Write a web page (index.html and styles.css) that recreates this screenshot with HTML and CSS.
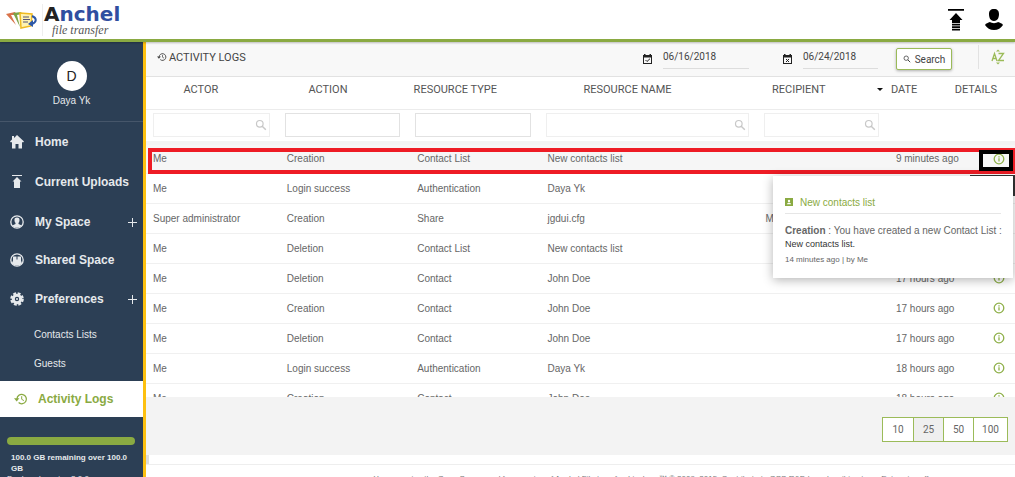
FILE: index.html
```html
<!DOCTYPE html>
<html lang="en">
<head>
<meta charset="utf-8">
<title>Anchel - Activity Logs</title>
<link rel="stylesheet" href="styles.css">
</head>
<body>
<svg class="defs" aria-hidden="true">
  <symbol id="info" viewBox="0 0 12 12"><circle cx="6" cy="6" r="4.8" fill="none" stroke="currentColor" stroke-width="1.3"/><path d="M6 5.3v3.2M6 3.2v1.2" stroke="currentColor" stroke-width="1.3"/></symbol>
  <symbol id="mag" viewBox="0 0 12 12"><circle cx="4.8" cy="4.8" r="3.3" fill="none" stroke="currentColor" stroke-width="1.2"/><path d="M7.2 7.2l3.6 3.6" stroke="currentColor" stroke-width="1.5"/></symbol>
  <symbol id="history" viewBox="0 0 14 12"><path d="M3 6a4.7 4.7 0 1 1 1.6 3.6" fill="none" stroke="currentColor" stroke-width="1.3"/><path d="M0 5.2h5.4L2.7 8.4z" fill="currentColor"/><path d="M7.7 3.2v3.1l2.2 1.3" fill="none" stroke="currentColor"/></symbol>
  <symbol id="upload" viewBox="0 0 16 22"><path d="M0 0h16v1.8H0zM8 4l6.5 7H12v3H4v-3H1.500zM4 14.800h8v1.800H4zM4 17.300h8v1.800H4zM4 19.800h8v1.800H4z" fill="currentColor"/></symbol>
  <symbol id="upload-small" viewBox="0 0 14 14"><path d="M2 0h10v1H2zM7 2l4.500 4.500H10V13H4V6.500H2.500z" fill="currentColor"/></symbol>
</svg>
<header class="top">
  <a class="logo" href="#" aria-label="Anchel file transfer">
    <svg class="logo-mark" viewBox="0 0 32 20">
      <path d="M0 4l9-2 2 3-6 0 5 10z" fill="#d9734a"/>
      <path d="M7 3l8-1 1 2-5 1 3 12z" fill="#7da547"/>
      <path d="M14 3l12 1-1 12-10 2z" fill="#fff3b0" stroke="#f0bb22" stroke-width="1.500"/>
      <path d="M17 7h6M17 9.500h7M17 12h5" stroke="#557" stroke-width="1"/>
      <path d="M26 6c5 2 5 6 0 8" fill="none" stroke="#2c58a8" stroke-width="2"/><path d="M27 10v7l-5-3z" fill="#2c58a8"/>
    </svg>
    <span class="logo-text"><b><i>A</i>nchel</b><em>file transfer</em></span>
  </a>
  <nav class="top-actions" aria-label="Account">
    <button aria-label="Uploads"><svg width="16" height="22"><use href="#upload"/></svg></button>
    <button aria-label="Profile"><svg width="18" height="22" viewBox="0 0 18 22"><path d="M9 0c3.500 0 5 2 5 5s-1 7-5 7-5-4-5-7 1.500-5 5-5zM0 16c1-2 3-2 5-3 2 1.500 6 1.500 8 0 2 1 4 1 5 3-2 3-5 5-9 5s-7-2-9-5z"/></svg></button>
  </nav>
</header>
<div class="app">
  <aside class="side">
    <div class="profile"><span class="avatar">D</span><span>Daya Yk</span></div>
    <nav class="menu">
      <a href="#"><svg viewBox="0 0 14 14"><path d="M7 0l7 6.500-1 1L12 7v6.500H8.500V9h-3v4.500H2V7l-1 .5-1-1L2 4.500V1h2v2z"/></svg>Home</a>
      <a href="#"><svg viewBox="0 0 14 14"><use href="#upload-small"/></svg>Current Uploads</a>
      <a href="#"><svg viewBox="0 0 14 14"><circle cx="7" cy="7" r="6.200" fill="none" stroke="currentColor" stroke-width="1.300"/><path d="M7 2.500c2 0 2.700 1.300 2.500 3-.2 1.500-.7 2-1 2.500v1l3.300 1.500C10 13 4 13 2.200 10.500L5.500 9V8c-.3-.5-.8-1-1-2.500-.2-1.700.5-3 2.500-3z"/></svg>My Space<span class="plus" aria-hidden="true"></span></a>
      <a class="shared" href="#"><svg viewBox="0 0 14 14"><circle cx="7" cy="7" r="6.200" fill="none" stroke="currentColor" stroke-width="1.300"/><path d="M3 3.500h3.500v3h1v-3H11v4l1 3C10 13 4 13 1.700 10.500L3 7.500z"/></svg>Shared Space</a>
      <a class="prefs" href="#"><svg viewBox="0 0 14 14"><circle cx="7" cy="7" r="3.700" fill="none" stroke="currentColor" stroke-width="3"/><circle cx="7" cy="7" r="5.700" fill="none" stroke="currentColor" stroke-width="2.200" stroke-dasharray="2.900 1.580"/><circle cx="7" cy="7" r="1"/></svg>Preferences<span class="plus" aria-hidden="true"></span></a>
      <a class="sub" href="#">Contacts Lists</a>
      <a class="sub" href="#">Guests</a>
      <a class="active" href="#"><svg viewBox="0 0 14 12"><use href="#history"/></svg>Activity Logs</a>
    </nav>
    <div class="quota"><div class="bar"></div><p>100.0 GB remaining over 100.0 GB</p><small>Deployed version 2.0.0</small></div>
  </aside>
  <main class="main">
    <form class="toolbar">
      <h1><svg width="10" height="10" viewBox="0 0 14 12"><use href="#history"/></svg>ACTIVITY LOGS</h1>
      <label class="date from"><svg width="9" height="10" viewBox="0 0 9 10"><path d="M1 0h1.500v1h4V0H8v1h1v9H0V1h1zM1 3.500V9h7V3.500z" fill-rule="evenodd"/><path d="M2.500 6l1.500 1.500L7 4.700" fill="none" stroke="#222"/></svg><input aria-label="From date" value="06/16/2018"></label>
      <label class="date to"><svg width="9" height="10" viewBox="0 0 9 10"><path d="M1 0h1.500v1h4V0H8v1h1v9H0V1h1zM1 3.500V9h7V3.500z" fill-rule="evenodd"/><path d="M3 5l3 3M6 5L3 8" stroke="#222"/></svg><input aria-label="To date" value="06/24/2018"></label>
      <button class="search" type="button"><svg width="8" height="8" viewBox="0 0 12 12"><use href="#mag"/></svg>Search</button>
      <button class="sort" type="button" aria-label="Sort alphabetically"><svg width="14" height="16" viewBox="0 0 14 16"><path d="M1 12L3.500 4.500 6 12M1.800 9.500h3.500M7.500 4.500h5l-5 7H13" fill="none" stroke="currentColor" stroke-width="1.300"/><path d="M5 2.500L7 .5l2 2zM5 13.500h4l-2 2z" fill="currentColor"/></svg></button>
    </form>
    <div class="list">
      <table>
        <colgroup><col class="c-actor"><col class="c-mid"><col class="c-mid"><col class="c-name"><col class="c-mid"><col class="c-date"><col></colgroup>
        <thead>
          <tr class="heads"><th class="h1">ACTOR</th><th class="h2">ACTION</th><th class="h3">RESOURCE TYPE</th><th class="h4">RESOURCE NAME</th><th class="h5">RECIPIENT</th><th class="hdate"><span><i></i>DATE</span></th><th class="hdet">DETAILS</th></tr>
          <tr class="filters"><td><label class="filter"><input aria-label="Filter actor"><svg width="12" height="12"><use href="#mag"/></svg></label></td><td><label class="filter plain"><input aria-label="Filter action"></label></td><td><label class="filter plain"><input aria-label="Filter resource type"></label></td><td><label class="filter"><input aria-label="Filter resource name"><svg width="12" height="12"><use href="#mag"/></svg></label></td><td><label class="filter"><input aria-label="Filter recipient"><svg width="12" height="12"><use href="#mag"/></svg></label></td><td></td><td></td></tr>
        </thead>
        <tbody>
          <tr class="picked"><td>Me</td><td>Creation</td><td>Contact List</td><td>New contacts list</td><td></td><td>9 minutes ago</td><td class="det"><button aria-label="Details"><svg><use href="#info"/></svg></button>
            <span class="tip"></span>
            <span class="frame-red"></span><span class="frame-black"></span>
            <section class="pop">
              <h2><svg width="8" height="8" viewBox="0 0 8 8"><path d="M0 0h8v8H0z" fill="currentColor"/><circle cx="4" cy="3" r="1.200" fill="#fff"/><path d="M1.800 6.200c.5-2 3.900-2 4.400 0z" fill="#fff"/></svg>New contacts list</h2>
              <p class="what"><strong>Creation</strong> : You have created a new Contact List :</p>
              <p class="item">New contacts list<span>.</span></p>
              <p class="when">14 minutes ago | by Me</p>
            </section></td></tr>
          <tr><td>Me</td><td>Login success</td><td>Authentication</td><td>Daya Yk</td><td></td><td></td><td></td></tr>
          <tr><td>Super administrator</td><td>Creation</td><td>Share</td><td>jgdui.cfg</td><td>Me</td><td></td><td></td></tr>
          <tr><td>Me</td><td>Deletion</td><td>Contact List</td><td>New contacts list</td><td></td><td></td><td></td></tr>
          <tr><td>Me</td><td>Deletion</td><td>Contact</td><td>John Doe</td><td></td><td>17 hours ago</td><td class="det"><button aria-label="Details"><svg><use href="#info"/></svg></button></td></tr>
          <tr><td>Me</td><td>Creation</td><td>Contact</td><td>John Doe</td><td></td><td>17 hours ago</td><td class="det"><button aria-label="Details"><svg><use href="#info"/></svg></button></td></tr>
          <tr><td>Me</td><td>Deletion</td><td>Contact</td><td>John Doe</td><td></td><td>17 hours ago</td><td class="det"><button aria-label="Details"><svg><use href="#info"/></svg></button></td></tr>
          <tr><td>Me</td><td>Login success</td><td>Authentication</td><td>Daya Yk</td><td></td><td>18 hours ago</td><td class="det"><button aria-label="Details"><svg><use href="#info"/></svg></button></td></tr>
          <tr><td>Me</td><td>Creation</td><td>Contact</td><td>John Doe</td><td></td><td>18 hours ago</td><td class="det"><button aria-label="Details"><svg><use href="#info"/></svg></button></td></tr>
        </tbody>
      </table>
    </div>
    <div class="pager"><div class="sizes"><button>10</button><button class="on">25</button><button>50</button><button class="wide">100</button></div></div>
    <div class="scroll"><span></span></div>
    <footer>You are using the Open Source and free version of Anchel File transfer, Linshare™ © 2009–2015. Contribute to OSS R&amp;D by subscribing to an Enterprise offer.</footer>
  </main>
</div>
</body>
</html>
```
FILE: styles.css
```css
* { box-sizing: border-box; }
body { margin: 0; height: 100vh; display: flex; flex-direction: column; overflow: hidden; font-family: "Liberation Sans", Arial, sans-serif; font-size: 10px; color: #666; background: #fff; }
button { font: inherit; color: inherit; background: none; border: 0; padding: 0; }
a { color: inherit; text-decoration: none; }
input { font: inherit; color: inherit; background: none; border: 0; padding: 0; min-width: 0; outline: 0; }
svg { display: block; flex: none; fill: currentColor; }
h1, h2, p { margin: 0; font-weight: normal; }
.defs { position: absolute; width: 0; height: 0; }

.top { flex: none; height: 42px; padding: 0 12px 0 6px; border-bottom: 3px solid #8aaa42; display: flex; justify-content: space-between; align-items: center; position: relative; z-index: 1; box-shadow: 0 1px 2px rgba(0, 0, 0, .25); }
.logo { display: flex; align-items: center; gap: 4px; }
.logo-mark { width: 32px; height: 20px; }
.logo-text { display: flex; flex-direction: column; border-left: 1px solid #eee; padding-left: 1px; }
.logo-text b { font: bold 20px/20px "DejaVu Sans", sans-serif; color: #2f4ea0; }
.logo-text b i { font-style: normal; color: #222; }
.logo-text em { font: italic 12px/12px "Liberation Serif", serif; color: #555; padding-left: 8px; }
.top-actions { display: flex; gap: 21px; color: #000; }

.app { flex: 1; min-height: 0; display: flex; }
.side { flex: none; width: 146px; background: #2c3f55; border-right: 3px solid #fdc010; color: #e6e9ec; overflow: hidden; }
.profile { height: 80px; padding-top: 19px; display: flex; flex-direction: column; align-items: center; gap: 3px; border-bottom: 1px solid #46566a; line-height: 14px; }
.avatar { width: 30px; height: 30px; border-radius: 50%; background: #fff; color: #222; font-size: 14px; display: flex; align-items: center; justify-content: center; }
.menu { display: flex; flex-direction: column; font-size: 12px; font-weight: bold; }
.menu a { height: 40px; padding: 0 6px 0 10px; display: flex; align-items: center; gap: 11px; flex: none; }
.menu svg { width: 14px; height: 14px; }
.menu .plus { margin-left: auto; width: 9px; height: 9px; background: linear-gradient(#e6e9ec, #e6e9ec) center / 100% 1px no-repeat, linear-gradient(#e6e9ec, #e6e9ec) center / 1px 100% no-repeat; }
.menu .shared { height: 36px; }
.menu .prefs { height: 42px; }
.menu .sub { height: 29px; padding-left: 34px; font-size: 10px; font-weight: normal; }
.menu .active { height: 36px; margin-top: 3px; padding-left: 14px; gap: 10px; background: #fff; color: #8aaa42; }
.quota { padding: 20px 8px 0 7px; font-size: 8px; line-height: 11px; }
.bar { height: 8px; border-radius: 4px; background: #8aaa42; margin-bottom: 7px; }
.quota p { padding: 0 6px 0 4px; font-weight: bold; }
.quota small { font-size: 8px; display: block; white-space: nowrap; line-height: 9px; }

.main { flex: 1; min-width: 0; display: flex; flex-direction: column; }
.toolbar { flex: none; height: 35px; background: #f8f8f8; border-bottom: 1px solid #e2e2e2; display: flex; align-items: center; padding: 0 10px 0 11px; color: #444; }
.toolbar h1 { display: flex; align-items: center; gap: 2px; font: 11px Roboto, sans-serif; margin: 0 auto 4px 0; }
.date { display: flex; align-items: center; gap: 11px; color: #222; }
.date input { height: 20px; border-bottom: 1px solid #ddd; padding-bottom: 5px; font: 10px Roboto, sans-serif; color: #444; }
.from input { width: 86px; }
.to input { width: 75px; }
.to { margin-left: 34px; }
.search { margin-left: 18px; width: 56px; height: 22px; border: 1px solid #9bbb59; border-radius: 2px; background: #fff; display: flex; align-items: center; justify-content: center; gap: 4px; font: 10px Roboto, sans-serif; box-shadow: 0 1px 3px rgba(0, 0, 0, .3); }
.sort { margin: 0 0 4px 26px; height: 24px; padding-left: 12px; border-left: 1px solid #e2e2e2; color: #9bbb59; }

.list { flex: 1; min-height: 0; overflow: hidden; }
table { width: 100%; border-collapse: collapse; table-layout: fixed; }
.c-actor { width: 15.4%; }
.c-mid { width: 15%; }
.c-name { width: 25.1%; }
.c-date { width: 7.5%; }
td, th { padding: 0 0 0 7px; text-align: left; font-weight: normal; white-space: nowrap; }
.heads th { height: 32px; padding: 0 0 7px; border-bottom: 1px solid #ececec; text-align: center; font: 11px Roboto, sans-serif; color: #555; }
.heads .h1 { padding-right: 24px; }
.heads .h2 { padding-right: 34px; }
.heads .h3 { padding-right: 40px; }
.heads .h4 { padding-right: 44px; }
.heads .h5 { padding-right: 50px; }
.hdate span { display: flex; align-items: center; gap: 8px; margin-left: -12px; }
.hdate i { border: 3px solid transparent; border-top-color: #111; border-bottom: 0; }
.heads .hdet { padding-right: 18px; text-align: right; }
.filters td { height: 34px; padding: 0 10px 0 5px; border-bottom: 4px solid #f3f3f3; }
.filters td:first-child { padding: 0 10px 0 7px; }
.filter { height: 24px; border: 1px solid #efefef; display: flex; align-items: center; padding: 0 2px; color: #c8c8c8; }
.filter input { flex: 1; width: 0; }
.filter.plain { border-color: #e2e2e2; }
tbody td { height: 30px; border-bottom: 1px solid #f0f0f0; }
.picked { background: #f6f6f6; }
.det { text-align: right; padding-right: 10px; position: relative; }
.det button { display: inline-block; vertical-align: middle; color: #8fb04a; }
.det button svg { width: 12px; height: 12px; }
.frame-red { position: absolute; top: 3px; right: 0; width: calc(100vw - 148px); height: 26px; border: 4px solid #ee1c25; border-right-width: 2px; }
.frame-black { position: absolute; top: 5px; right: 2px; width: 34px; height: 21px; border: 4px solid #000; }
.tip { position: absolute; top: 30px; right: 0; width: 45px; height: 21px; background: #333; }
.pop { position: absolute; top: 31px; right: 2px; width: 240px; height: 102px; padding: 20px 12px 0; background: #fff; text-align: left; box-shadow: 0 2px 10px rgba(0, 0, 0, .3); z-index: 1; white-space: nowrap; }
.pop h2 { height: 18px; display: flex; align-items: flex-start; gap: 7px; border-bottom: 1px solid #e6e6e6; font-size: 10px; line-height: 14px; color: #8aaa42; }
.pop h2 svg { margin-top: 2px; }
.pop .what { margin-top: 9px; line-height: 15px; }
.pop .item { font-size: 9px; line-height: 13px; color: #333; }
.pop .when { font-size: 8px; line-height: 18px; }

.pager { flex: none; height: 58px; padding: 0 7px; background: #f3f3f3; display: flex; justify-content: flex-end; align-items: center; }
.sizes { display: flex; height: 25px; margin-top: 6px; border: 1px solid #9bbb59; background: #fff; font: 10px Roboto, sans-serif; }
.sizes button { width: 30px; }
.sizes button + button { border-left: 1px solid #9bbb59; }
.sizes .on { background: #efefef; }
.sizes .wide { width: 34px; }
.scroll { flex: none; height: 9px; }
.scroll span { display: block; width: 3px; height: 9px; background: #ddd; }
footer { flex: none; height: 13px; border-top: 1px solid #eee; padding-top: 9px; overflow: hidden; text-align: center; white-space: nowrap; font-size: 8px; line-height: 10px; color: #777; padding-left: 150px; }
```
